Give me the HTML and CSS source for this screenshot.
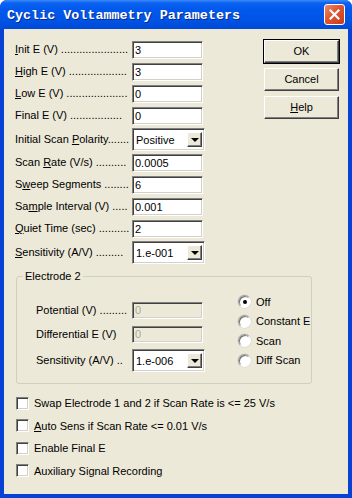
FILE: index.html
```html
<!DOCTYPE html>
<html lang="en">
<head>
    <meta charset="UTF-8">
    <title>Cyclic Voltammetry Parameters</title>
    <link rel="stylesheet" href="styles.css">
</head>
<body>
    <div class="window">
        <div class="titlebar">
            <span class="title">Cyclic Voltammetry Parameters</span>
            <span class="close">
                <svg width="11" height="11" viewBox="0 0 11 11"><path d="M1.5 1.5 L9.5 9.5 M9.5 1.5 L1.5 9.5" stroke="#fff" stroke-width="2.2" stroke-linecap="square"/></svg>
            </span>
        </div>
        <div class="client">
            <div class="top">
                <div class="fields">
                    <div class="row"><span class="lbl"><u>I</u>nit E (V) ......................</span><span class="edit">3</span></div>
                    <div class="row"><span class="lbl"><u>H</u>igh E (V) ...................</span><span class="edit">3</span></div>
                    <div class="row"><span class="lbl"><u>L</u>ow E (V) ....................</span><span class="edit">0</span></div>
                    <div class="row"><span class="lbl">Final E (V) .................</span><span class="edit">0</span></div>
                    <div class="row sel-row"><span class="lbl">Initial Scan <u>P</u>olarity.......</span><span class="combo"><span class="val">Positive</span><span class="arrow"></span></span></div>
                    <div class="row"><span class="lbl">Scan <u>R</u>ate (V/s) ..........</span><span class="edit">0.0005</span></div>
                    <div class="row"><span class="lbl">S<u>w</u>eep Segments ........</span><span class="edit">6</span></div>
                    <div class="row"><span class="lbl">Sa<u>m</u>ple Interval (V) .....</span><span class="edit">0.001</span></div>
                    <div class="row"><span class="lbl"><u>Q</u>uiet Time (sec) ..........</span><span class="edit">2</span></div>
                    <div class="row sel-row"><span class="lbl"><u>S</u>ensitivity (A/V) .........</span><span class="combo"><span class="val">1.e-001</span><span class="arrow"></span></span></div>
                </div>
                <div class="buttons">
                    <div class="btn default">OK</div>
                    <div class="btn">Cancel</div>
                    <div class="btn"><u>H</u>elp</div>
                </div>
            </div>

            <div class="group">
                <span class="legend">Electrode 2</span>
                <div class="group-body">
                    <div class="fields">
                        <div class="row grow"><span class="lbl small">Potential (V) .........</span><span class="edit disabled">0</span></div>
                        <div class="row grow"><span class="lbl small">Differential E (V)</span><span class="edit disabled">0</span></div>
                        <div class="row sel-row"><span class="lbl small">Sensitivity (A/V) ..</span><span class="combo"><span class="val">1.e-006</span><span class="arrow"></span></span></div>
                    </div>
                    <div class="radios">
                        <div class="radio-row"><span class="radio on"></span>Off</div>
                        <div class="radio-row"><span class="radio"></span>Constant E</div>
                        <div class="radio-row"><span class="radio"></span>Scan</div>
                        <div class="radio-row"><span class="radio"></span>Diff Scan</div>
                    </div>
                </div>
            </div>

            <div class="checks">
                <div class="check-row"><span class="box"></span>Swap Electrode 1 and 2 if Scan Rate is &lt;= 25 V/s</div>
                <div class="check-row"><span class="box"></span><span><u>A</u>uto Sens if Scan Rate &lt;= 0.01 V/s</span></div>
                <div class="check-row"><span class="box"></span>Enable Final E</div>
                <div class="check-row"><span class="box"></span>Auxiliary Signal Recording</div>
            </div>
        </div>
    </div>
</body>
</html>
```

FILE: styles.css
```css
body {
    margin: 0;
    background: #fff;
    font-family: "Liberation Sans", Arial, sans-serif;
    font-size: 11px;
    color: #000;
}
.window {
    width: 352px;
    height: 498px;
    background: #0842d4;
    border-radius: 7px 7px 0 0;
    overflow: hidden;
    display: flex;
    flex-direction: column;
}
.titlebar {
    height: 29px;
    flex: none;
    display: flex;
    align-items: center;
    padding: 0 7px 0 7px;
    background: linear-gradient(to bottom, #3b8cf8 0, #0b62f0 3px, #0058ec 10px, #0054e6 20px, #0049d6 29px);
}
.title {
    font-family: "Liberation Mono", "Courier New", monospace;
    font-weight: bold;
    font-size: 13.4px;
    color: #fff;
    text-shadow: 1px 1px 0 #0a2a8c;
    margin-top: 1px;
}
.close {
    margin-left: auto;
    width: 19px;
    height: 19px;
    border: 1px solid #fff;
    border-radius: 3px;
    background: linear-gradient(135deg, #f08a68 0, #e0552f 45%, #c83a1a 100%);
    display: flex;
    align-items: center;
    justify-content: center;
}
.client {
    flex: 1;
    margin: 0 4px 4px 4px;
    background: #ece9d8;
    padding: 11px 0 0 11px;
}
.top {
    display: flex;
}
.fields {
    display: flex;
    flex-direction: column;
}
.row {
    display: flex;
    align-items: center;
    height: 20px;
    margin-bottom: 2px;
}
.row.grow {
    height: 19px;
    margin-bottom: 5px;
}
.sel-row {
    height: 21px;
    margin-top: 1px;
    margin-bottom: 3px;
}
.lbl {
    width: 117px;
    white-space: nowrap;
    overflow: hidden;
    margin-top: -2px;
}
.lbl.small {
    width: 96px;
}
.edit {
    width: 67px;
    height: 16px;
    line-height: 16px;
    padding-left: 2px;
    background: #fff;
    border: 1px solid;
    border-color: #808080 #fff #fff #808080;
    box-shadow: inset 1px 1px #404040, inset -1px -1px #d4d0c8;
}
.grow .edit {
    height: 15px;
    line-height: 15px;
}
.edit.disabled {
    background: #ece9d8;
    color: #aca899;
}
.combo {
    width: 67px;
    height: 17px;
    padding: 2px;
    background: #fff;
    border-top: 1px solid #808080;
    border-left: 1px solid #808080;
    border-right: 1px solid #fff;
    border-bottom: 1px solid #fff;
    box-shadow: inset 1px 1px #404040, inset -1px -1px #d4d0c8;
    display: flex;
    align-items: center;
}
.combo .val {
    flex: 1;
    padding-left: 1px;
}
.arrow {
    width: 13px;
    height: 13px;
    background: #ece9d8;
    border: 1px solid;
    border-color: #fff #404040 #404040 #fff;
    box-shadow: inset -1px -1px #808080;
    position: relative;
}
.arrow::after {
    content: "";
    position: absolute;
    left: 3px;
    top: 5px;
    border-left: 4px solid transparent;
    border-right: 4px solid transparent;
    border-top: 4px solid #000;
}
.buttons {
    margin-left: 59px;
    display: flex;
    flex-direction: column;
    gap: 5px;
}
.btn {
    width: 73px;
    height: 21px;
    line-height: 21px;
    text-align: center;
    background: #ece9d8;
    border: 1px solid;
    border-color: #fff #404040 #404040 #fff;
    box-shadow: inset -1px -1px #808080;
}
.btn.default {
    outline: 1px solid #000;
}
.group {
    position: relative;
    width: 294px;
    height: 106px;
    margin-top: 10px;
    margin-left: 1px;
    border: 1px solid #d0d0bf;
    border-radius: 3px;
}
.legend {
    position: absolute;
    left: 6px;
    top: -7px;
    padding: 0 2px;
    background: #ece9d8;
}
.group-body {
    display: flex;
    padding: 24px 0 0 19px;
}
.radios {
    margin-left: 33px;
    margin-top: -9px;
    display: flex;
    flex-direction: column;
}
.radio-row {
    display: flex;
    align-items: center;
    height: 19.5px;
    white-space: nowrap;
}
.radio {
    width: 11px;
    height: 11px;
    border-radius: 50%;
    border: 1px solid;
    border-color: #a0a0a0 #fff #fff #a0a0a0;
    background: #fff;
    box-shadow: inset 1px 1px #707070, 0 0 0 0.5px #d4d0c8;
    margin-right: 5px;
    position: relative;
}
.radio.on::after {
    content: "";
    position: absolute;
    left: 3.5px;
    top: 3.5px;
    width: 4px;
    height: 4px;
    border-radius: 50%;
    background: #000;
}
.checks {
    margin-top: 8px;
    margin-left: 1px;
    display: flex;
    flex-direction: column;
}
.check-row {
    display: flex;
    align-items: center;
    height: 22.5px;
}
.box {
    width: 11px;
    height: 11px;
    background: #fff;
    border: 1px solid;
    border-color: #808080 #fff #fff #808080;
    box-shadow: inset 1px 1px #404040, inset -1px -1px #d4d0c8;
    margin-right: 5px;
}
```
